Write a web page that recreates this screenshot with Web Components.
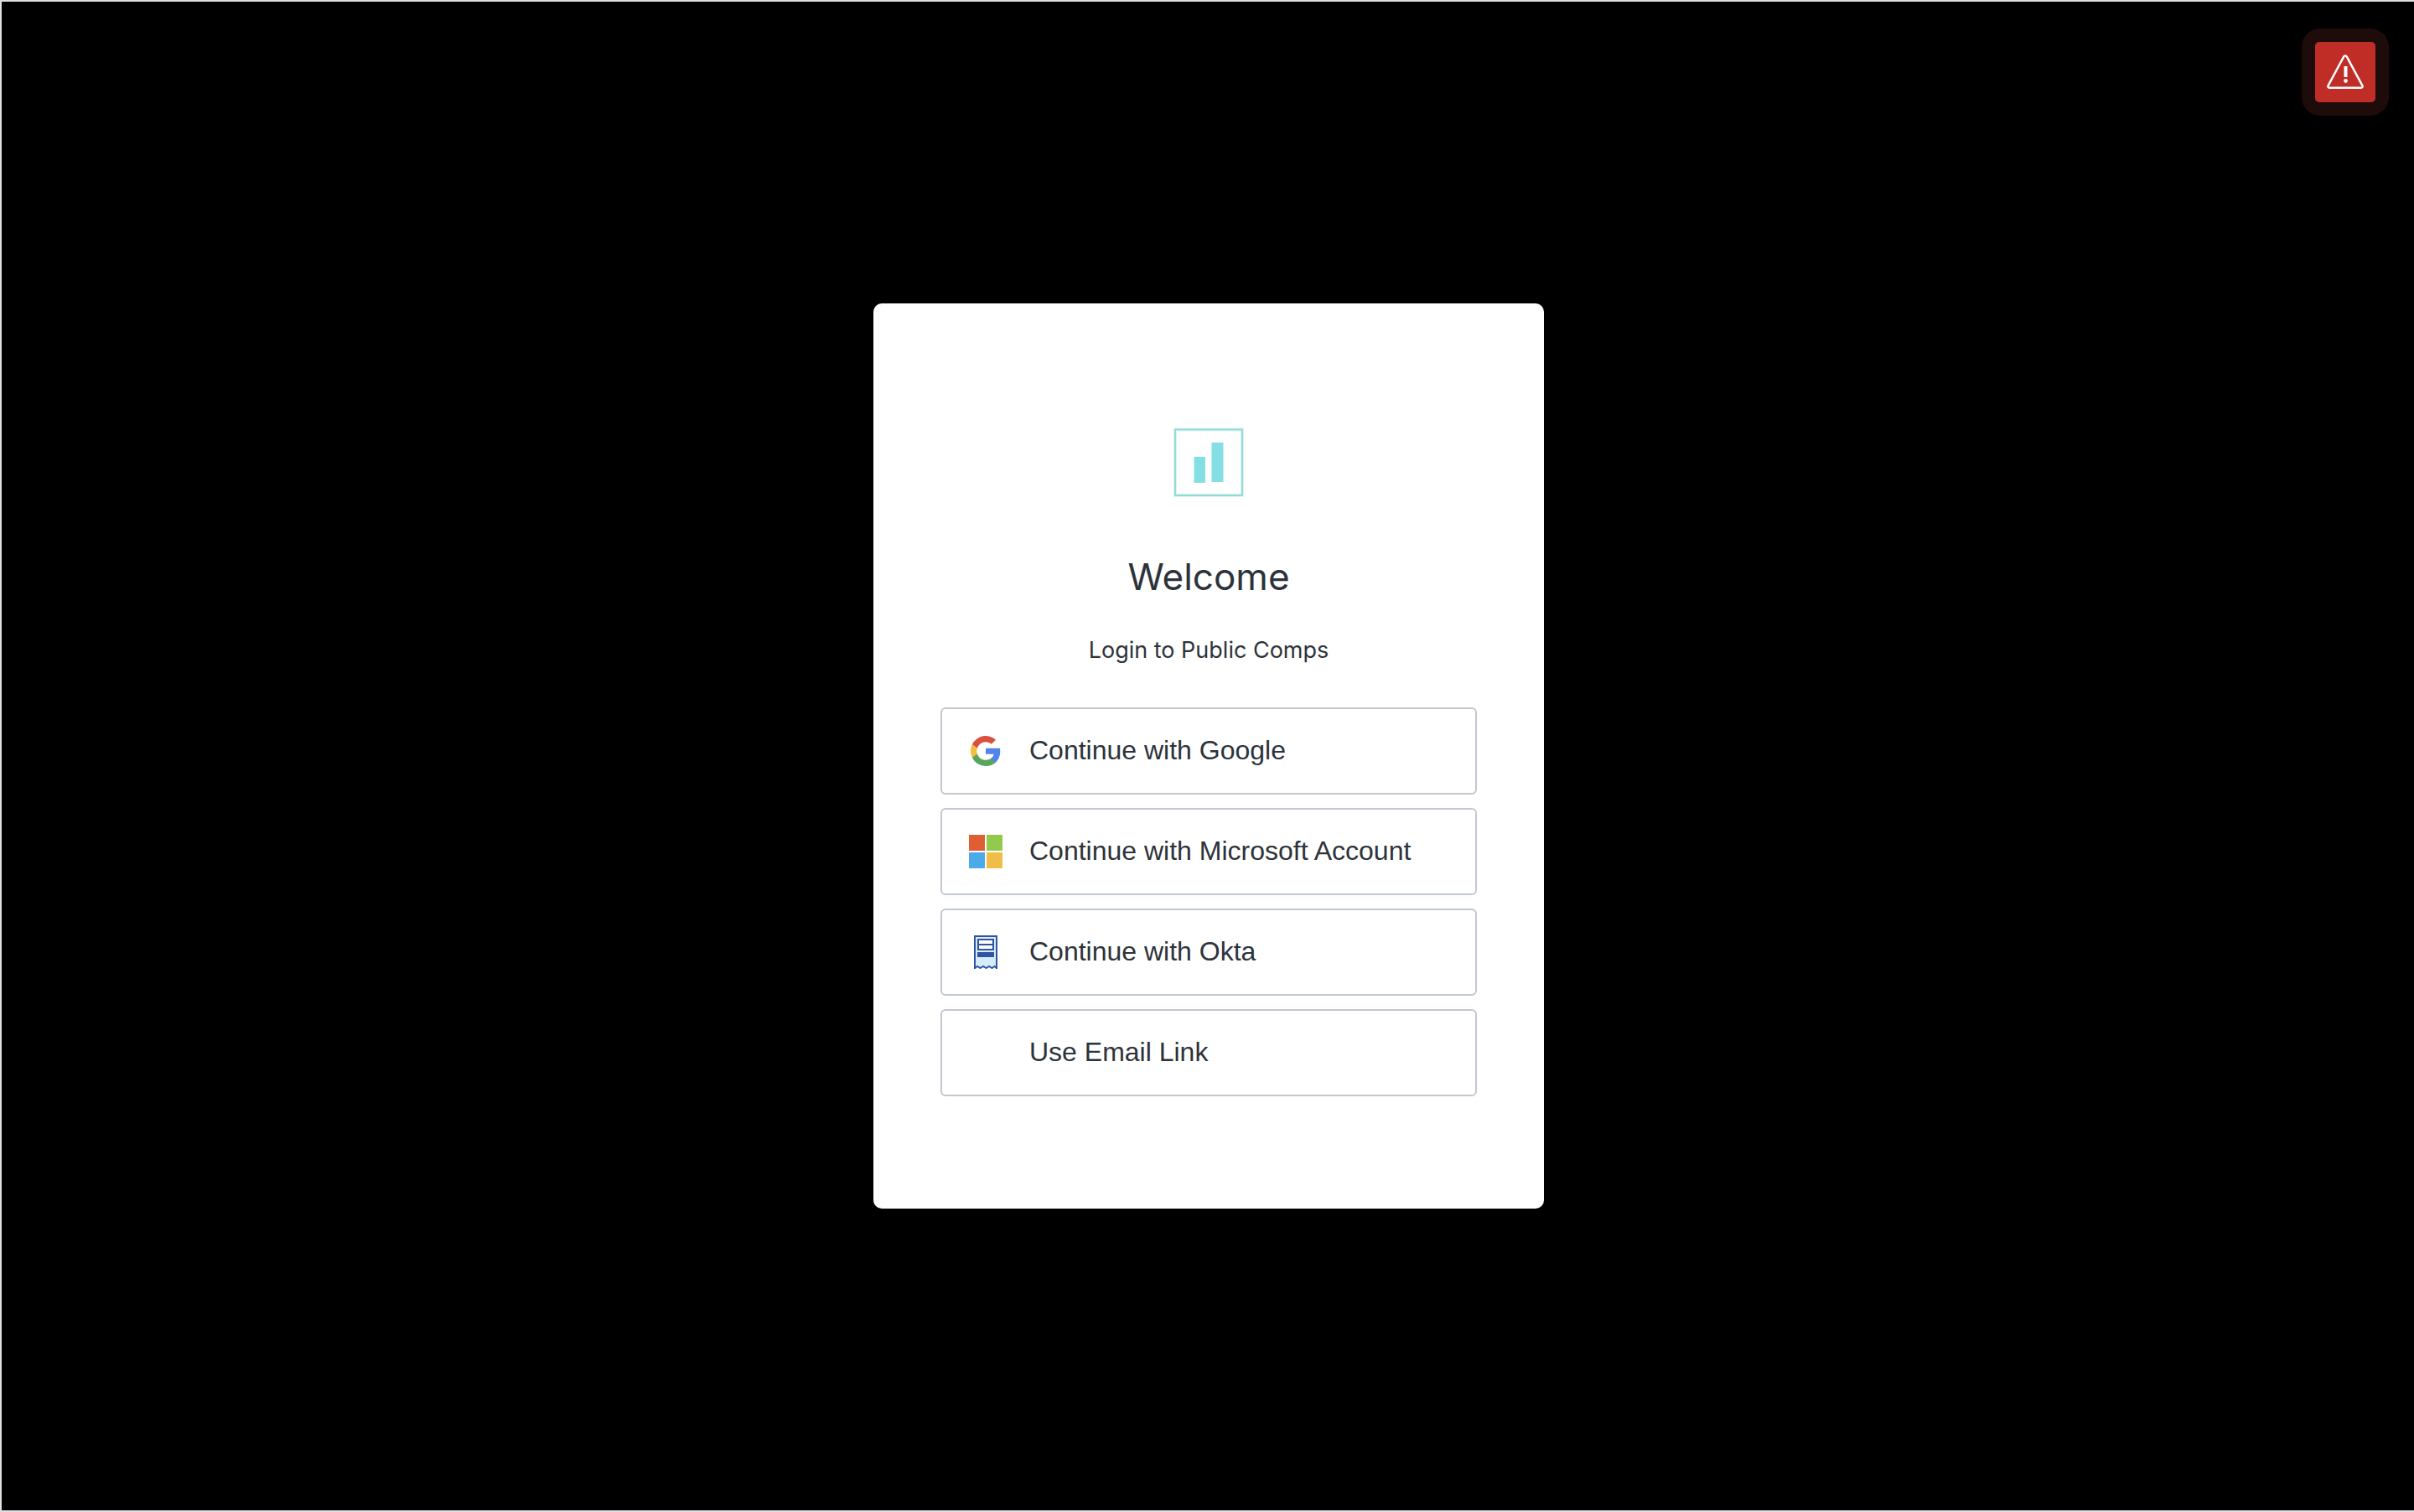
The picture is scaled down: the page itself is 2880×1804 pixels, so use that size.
<!DOCTYPE html>
<html lang="en">
<head>
<meta charset="utf-8">
<title>Log in | Public Comps</title>
<style>
html,body{height:100%}
body{margin:0;background:#000;color:#2d333a;font-family:Inter,"Liberation Sans",sans-serif}
</style>
</head>
<body>
<login-page>
  <alert-button slot="alert"></alert-button>
  <login-card heading="Welcome" description="Login to Public Comps">
    <brand-logo slot="logo"></brand-logo>
    <provider-button>
      <svg slot="icon" width="40" height="40" viewBox="0 0 40 40" aria-hidden="true">
        <g transform="translate(2 2) scale(2)">
          <path fill="#5383ec" d="M17.64 9.2c0-.64-.06-1.25-.16-1.84H9v3.48h4.84a4.14 4.14 0 0 1-1.8 2.72v2.26h2.92c1.7-1.57 2.68-3.88 2.68-6.62z"/>
          <path fill="#58a55c" d="M9 18c2.43 0 4.47-.8 5.96-2.18l-2.92-2.26c-.8.54-1.83.86-3.04.86-2.34 0-4.33-1.58-5.04-3.71H.96v2.33A9 9 0 0 0 9 18z"/>
          <path fill="#f1bf42" d="M3.96 10.71a5.4 5.4 0 0 1 0-3.42V4.96H.96a9 9 0 0 0 0 8.08l3-2.33z"/>
          <path fill="#d85140" d="M9 3.58c1.32 0 2.5.45 3.44 1.35l2.58-2.59A9 9 0 0 0 .96 4.96l3 2.33C4.67 5.16 6.66 3.58 9 3.58z"/>
        </g>
      </svg>
      Continue with Google
    </provider-button>
    <provider-button>
      <svg slot="icon" width="40" height="40" viewBox="0 0 40 40" aria-hidden="true">
        <path fill="#df5e34" d="M0 0h19v19H0z"/><path fill="#93c94c" d="M21 0h19v19H21z"/>
        <path fill="#4daae8" d="M0 21h19v19H0z"/><path fill="#f0be46" d="M21 21h19v19H21z"/>
      </svg>
      Continue with Microsoft Account
    </provider-button>
    <provider-button>
      <svg slot="icon" width="40" height="40" viewBox="0 0 40 40" aria-hidden="true">
        <path fill="#d6edf9" d="M6 0h28v39l-3.500-2-3.500 2-3.500-2-3.500 2-3.500-2-3.500 2-3.500-2L6 39z"/>
        <path fill="none" stroke="#3054a5" stroke-width="2" d="M7 40V1h26v39"/>
        <path fill="none" stroke="#3054a5" stroke-width="2" d="M7 39l3-2 3.500 2 3.500-2 3.500 2 3.500-2 3.500 2 3-2 2.500 2"/>
        <path fill="#3054a5" d="M10 4h20v14H10zM10 20h20v6H10z"/>
        <path fill="#fff" d="M12 6h16v4H12zM12 12h16v4H12z"/>
      </svg>
      Continue with Okta
    </provider-button>
    <provider-button>Use Email Link</provider-button>
  </login-card>
</login-page>

<script>
class BaseElement extends HTMLElement {
  connectedCallback() {
    if (!this.shadowRoot) this.attachShadow({ mode: 'open' }).innerHTML = this.render();
  }
}

customElements.define('login-page', class extends BaseElement {
  render() {
    return `<style>
      :host{display:flex;box-sizing:border-box;min-height:100%;position:relative;background:#000;
        border:solid #dde1e1;border-width:2px 0 2px 2px;padding-left:2px}
      main{flex:1;display:flex;align-items:center;justify-content:center}
      .alert{position:absolute;top:32px;right:30px}
    </style>
    <main><slot></slot></main><div class="alert"><slot name="alert"></slot></div>`;
  }
});

customElements.define('login-card', class extends BaseElement {
  render() {
    return `<style>
      :host{display:block;box-sizing:border-box;width:800px;max-width:100%;background:#fff;border-radius:10px;
        padding:148px 80px 134px}
      header{display:flex;flex-direction:column;align-items:center;text-align:center}
      h1{margin:64px 0 0;font-size:44px;line-height:60px;font-weight:400}
      p{margin:38px 0 0;font-size:27px;line-height:40px}
      .providers{display:flex;flex-direction:column;gap:16px;margin-top:48px}
    </style>
    <header><slot name="logo"></slot><h1>${this.getAttribute('heading')}</h1>
    <p>${this.getAttribute('description')}</p></header>
    <div class="providers"><slot></slot></div>`;
  }
});

customElements.define('brand-logo', class extends BaseElement {
  render() {
    return `<style>:host{display:block}svg{display:block}</style>
    <svg width="84" height="84" viewBox="0 0 84 84" role="img" aria-label="Public Comps">
      <path fill="none" stroke="#dcf4f2" stroke-width="4" d="M2 2.500h80v78.500H2z"/>
      <path fill="none" stroke="#93dbd5" stroke-width="2" d="M2 2.500h80v78.500H2z"/>
      <path fill="#83dfe4" d="M24.500 35H38v31H24.500zM45.500 18H59.500v47H45.500z"/>
    </svg>`;
  }
});

customElements.define('provider-button', class extends BaseElement {
  render() {
    return `<style>
      :host{display:block}
      button{display:flex;align-items:center;gap:32px;box-sizing:border-box;width:100%;min-height:104px;margin:0;
        padding:0 32px;border:2px solid #c2c8d0;border-radius:6px;background:#fff;color:inherit;
        font:32px/40px "Liberation Sans",Arial,sans-serif;text-align:left;cursor:pointer}
      .icon{display:block;width:40px;height:40px;flex:none}
      .label{padding-bottom:2px}
      ::slotted(svg){display:block}
    </style>
    <button type="button"><span class="icon"><slot name="icon"></slot></span><span class="label"><slot></slot></span></button>`;
  }
});

customElements.define('alert-button', class extends BaseElement {
  render() {
    return `<style>
      :host{display:block;padding:16px;border-radius:22px;background:#1e0c0b}
      button{display:flex;align-items:center;justify-content:center;width:72px;height:72px;padding:0;border:0;
        border-radius:5px;background:#c02d27;cursor:pointer}
    </style>
    <button type="button" aria-label="Show alert">
      <svg width="44" height="42" viewBox="0 0 44 42" aria-hidden="true">
        <path fill="none" stroke="#fff" stroke-width="2.500" stroke-linejoin="round" d="M20.200 2.600a2.100 2.100 0 0 1 3.600 0l18.600 34.600a1.700 1.700 0 0 1-1.500 2.600H3.100a1.700 1.700 0 0 1-1.500-2.600z"/>
        <path fill="#fff" d="M20.500 14h4v13h-4z"/><circle cx="22.500" cy="31.500" r="2.400" fill="#fff"/>
      </svg>
    </button>`;
  }
});
</script>
</body>
</html>
